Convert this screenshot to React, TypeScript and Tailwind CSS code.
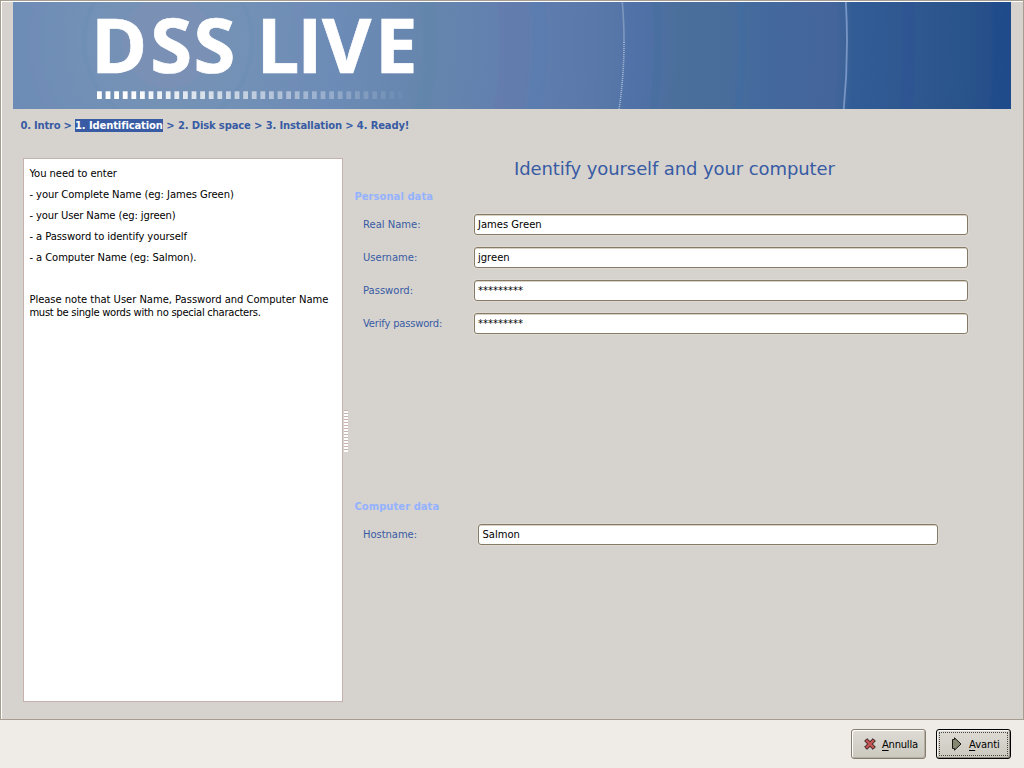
import React from 'react';

const dashes = Array.from({ length: 36 }, (_, i) => i);

function Banner() {
  return (
    <svg className="mr-[11px] ml-3 block h-[107px] w-[998px] shrink-0" viewBox="13 2 998 107">
      <defs>
        <radialGradient id="glow" gradientUnits="userSpaceOnUse" cx="168" cy="42" r="850">
          <stop offset="0" stopColor="#7791b5" />
          <stop offset="0.095" stopColor="#7391b6" />
          <stop offset="0.2" stopColor="#6c8bb6" />
          <stop offset="0.3" stopColor="#6686ae" />
          <stop offset="0.41" stopColor="#627fae" />
          <stop offset="0.43" stopColor="#5f7dae" />
          <stop offset="0.5" stopColor="#5a79aa" />
          <stop offset="0.53" stopColor="#5676a8" />
          <stop offset="0.545" stopColor="#5072a9" />
          <stop offset="0.58" stopColor="#4d6fa2" />
          <stop offset="0.6" stopColor="#4b6f9b" />
          <stop offset="0.66" stopColor="#496d9b" />
          <stop offset="0.7" stopColor="#43699e" />
          <stop offset="0.785" stopColor="#44659b" />
          <stop offset="0.797" stopColor="#3c6398" />
          <stop offset="0.806" stopColor="#315c95" />
          <stop offset="0.88" stopColor="#2f5790" />
          <stop offset="0.94" stopColor="#29538b" />
          <stop offset="0.967" stopColor="#274f8a" />
          <stop offset="0.972" stopColor="#214c8b" />
          <stop offset="1" stopColor="#1e4a8b" />
        </radialGradient>
        <clipPath id="frame">
          <rect x="13" y="2" width="998" height="107" />
        </clipPath>
      </defs>
      <g clipPath="url(#frame)">
        <rect x="13" y="2" width="998" height="107" fill="url(#glow)" />
        <g fill="none">
          <circle cx="168" cy="42" r="46" fill="#8590b5" fillOpacity=".35" />
          <circle cx="168" cy="42" r="84" stroke="#6c8db4" strokeOpacity=".4" strokeWidth="4" />
          <circle cx="168" cy="42" r="135" stroke="#748db9" strokeOpacity=".35" strokeWidth="12" />
          <circle cx="168" cy="42" r="262" stroke="#5d89aa" strokeOpacity=".3" strokeWidth="14" />
          <circle cx="168" cy="42" r="347" stroke="#6879b0" strokeOpacity=".35" strokeWidth="30" />
          <circle cx="168" cy="42" r="372" stroke="#547fb4" strokeOpacity=".3" strokeWidth="14" />
          <circle cx="168" cy="42" r="490" stroke="#416fa0" strokeOpacity=".3" strokeWidth="8" />
          <circle cx="168" cy="42" r="574" stroke="#3d6ca4" strokeOpacity=".3" strokeWidth="7" />
          <circle cx="168" cy="42" r="741" stroke="#2f5399" strokeOpacity=".35" strokeWidth="12" />
          <circle cx="168" cy="42" r="456" stroke="#a7b9d6" strokeWidth="1.6" strokeDasharray="1 1" />
          <circle cx="168" cy="42" r="679" stroke="#7895c5" strokeWidth="1.8" />
        </g>
      </g>
      <text y="73.2" x="91 150.3 193.5 226 256.5 297.3 322 375" fill="#fff" stroke="#fff" strokeWidth=".7" className="font-['Open_Sans',sans-serif] text-[76px] font-bold">
        DSS LIVE
      </text>
      {dashes.map((i) => (
        <rect key={i} x={97 + i * 8.6} y="91.3" width="4.8" height="7.7" fill="#fff" fillOpacity={i < 4 ? 1 : 1 - (i - 3) * 0.03} />
      ))}
    </svg>
  );
}

function Field({ label, value, labelClass = '' }: { label: string; value: string; labelClass?: string }) {
  return (
    <div className="flex h-[21px] items-center">
      <label className={`w-[112px] pl-px text-[#385ba4] ${labelClass}`}>{label}</label>
      <Box className="w-[494px] pl-[3px]">{value}</Box>
    </div>
  );
}

function Box({ className, children }: { className: string; children: string }) {
  return (
    <div className={`flex h-[21px] items-center rounded-[3px] border border-[#857a66] bg-white text-black shadow-[inset_0_1px_#d8d1c4,0_0_0_1px_#dedad3] ${className}`}>
      <span>{children}</span>
    </div>
  );
}

export default function App() {
  return (
    <div className="flex h-[768px] w-[1024px] flex-col overflow-hidden bg-[#efebe7] font-['DejaVu_Sans',sans-serif] text-[10px] leading-[13px] text-black">
      <div className="flex h-[720px] flex-col border border-[#a59d90] bg-[#d6d3ce] shadow-[inset_1px_1px_#fff]">
        <div className="mt-px flex flex-col">
          <Banner />
        </div>
        <nav className="mt-[10px] ml-[19.5px] flex h-[13px] whitespace-pre font-bold text-[#385ba4]">
          <span className="w-[54.5px] tracking-[-0.23px]">0. Intro &gt; </span>
          <span className="w-[88px] bg-[#385ba4] tracking-[-0.12px] text-white">1. Identification</span>
          <span className="tracking-[-0.14px]"> &gt; 2. Disk space &gt; 3. Installation &gt; 4. Ready!</span>
        </nav>
        <div className="mt-[26px] ml-[22px] flex h-[544px]">
          <aside className="flex w-[320px] shrink-0 flex-col gap-2 border border-[#c6b2ad] bg-white pt-2 pl-[5.4px]">
            <p className="tracking-[-0.06px]">You need to enter</p>
            <p className="tracking-[-0.07px]">- your Complete Name (eg: James Green)</p>
            <p className="tracking-[-0.12px]">- your User Name (eg: jgreen)</p>
            <p className="tracking-[-0.08px]">- a Password to identify yourself</p>
            <p className="tracking-[-0.07px]">- a Computer Name (eg: Salmon).</p>
            <p className="h-[13px]" />
            <p className="whitespace-nowrap">
              <span className="tracking-[-0.035px]">Please note that User Name, Password and Computer Name</span><br />
              <span className="tracking-[-0.27px]">must be single words with no special characters.</span>
            </p>
          </aside>
          <div className="mt-[252px] ml-px h-[42px] w-1 shrink-0 bg-[repeating-linear-gradient(to_bottom,#c6b2ad_0_1px,#fff_1px_2px,#fff_2px_3px)]" />
          <main className="ml-[6.4px] w-[640px]">
            <h1 className="h-[22px] text-center text-[18px] leading-[22px] tracking-[-0.1px] text-[#385ba4]">Identify yourself and your computer</h1>
            <h2 className="mt-[10px] font-bold tracking-[0.04px] text-[#94b2ff]">Personal data</h2>
            <div className="mt-[11px] ml-[7.6px] flex flex-col gap-3">
              <Field label="Real Name:" value="James Green" />
              <Field label="Username:" value="jgreen" />
              <Field label="Password:" value="*********" />
              <Field label="Verify password:" value="*********" labelClass="tracking-[-0.2px]" />
            </div>
            <h2 className="mt-[166px] font-bold tracking-[0.04px] text-[#94b2ff]">Computer data</h2>
            <div className="mt-[11px] ml-[8.6px] flex h-[21px] items-center">
              <label className="w-[115px] tracking-[-0.05px] text-[#385ba4]">Hostname:</label>
              <Box className="w-[460px] pl-[3.5px]">Salmon</Box>
            </div>
          </main>
        </div>
      </div>
      <footer className="flex h-12 justify-end gap-[10px] pt-[9px] pr-[13px]">
        <button className="flex h-[30px] w-[75px] items-center rounded-[3px] border border-[#857d6f] bg-linear-to-b from-[#dedbd5] to-[#cbc8bf] pl-[12px] shadow-[inset_1px_1px_#fff,inset_-1px_-1px_#b5aea2]">
          <svg className="mr-[6px] h-3 w-3" viewBox="0 0 12 12">
            <path d="M3 .7 6 3.6 9 .7 11.3 3 8.4 6l2.9 3L9 11.3 6 8.4 3 11.3.7 9l2.900-3L.7 3z" fill="#c25252" stroke="#2a1818" />
          </svg>
          <span className="tracking-[-0.25px]"><span className="underline decoration-1 underline-offset-2">A</span>nnulla</span>
        </button>
        <button className="flex h-[30px] w-[75px] items-center rounded-[3px] border border-black bg-linear-to-b from-[#dedbd5] to-[#cbc8bf] p-[2px] shadow-[inset_1px_1px_#f7f5f2,inset_-1px_-1px_#918a7e]">
          <span className="flex h-6 w-[69px] items-center border border-dotted border-[#4b473e] pl-[11px]">
            <svg className="mr-[7px] h-[14px] w-[11px]" viewBox="0 0 11 14">
              <path d="M1.500 2.500h2V.8L10 7l-6.500 6.200v-1.700h-2z" fill="#858772" stroke="#171711" />
            </svg>
            <span className="tracking-[-0.1px]"><span className="underline decoration-1 underline-offset-2">A</span>vanti</span>
          </span>
        </button>
      </footer>
    </div>
  );
}
